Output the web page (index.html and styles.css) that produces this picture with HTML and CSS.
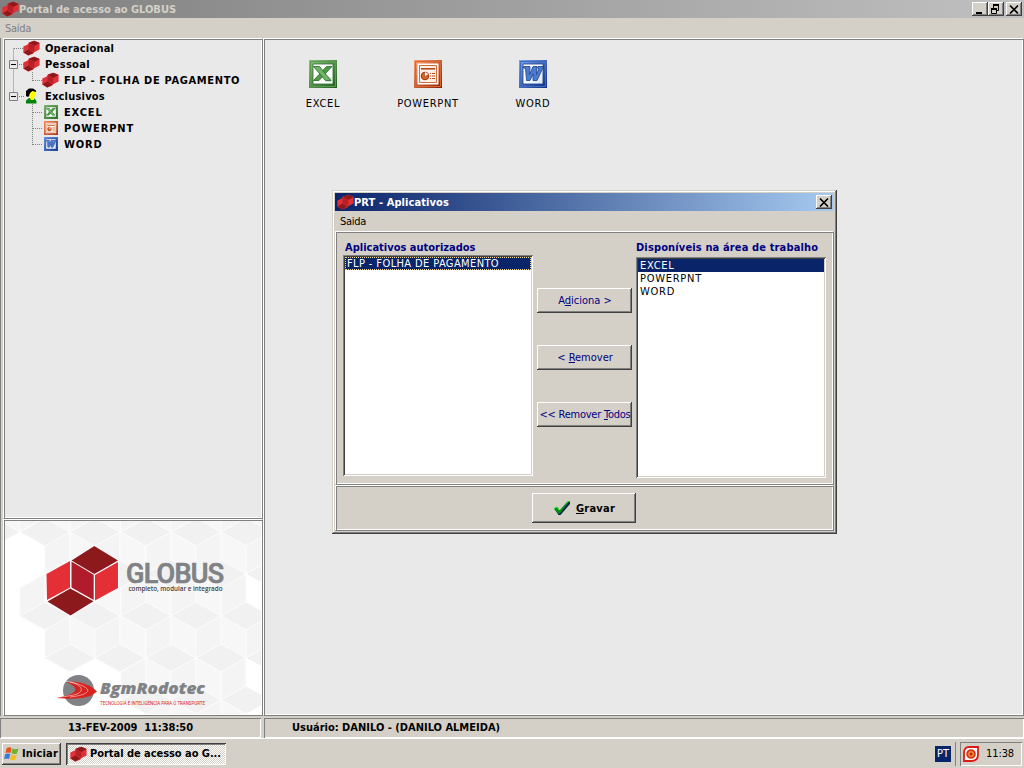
FILE: index.html
```html
<!DOCTYPE html>
<html lang="pt">
<head>
<meta charset="utf-8">
<title>Portal de acesso ao GLOBUS</title>
<link rel="stylesheet" href="styles.css">
</head>
<body>
<svg class="defs" width="0" height="0">
  <defs>
    <symbol id="cubes" viewBox="0 0 16 14">
      <path d="M0.300 5.500 4.500 3.800 5.500 1.800 10.500 0.200 15.600 2V8.500L10.500 11 9.500 12.500 5 14 0.300 11.500Z" fill="#e03038"/>
      <path d="M5.500 2 10.500 0.200 15.600 2.300 10.600 5Z" fill="#8e181c"/>
      <path d="M5.500 2.300 10.600 5V10.800L5 8Z" fill="#b82028"/>
      <path d="M0.600 11 5 8.400 9.700 11.200 5 14Z" fill="#8e181c"/>
    </symbol>
    <linearGradient id="gx" x1="0" y1="0" x2="1" y2="1"><stop offset="0" stop-color="#8cc47c"/><stop offset="1" stop-color="#1c5c1c"/></linearGradient>
    <linearGradient id="gp" x1="0" y1="0" x2="1" y2="1"><stop offset="0" stop-color="#ffa070"/><stop offset="1" stop-color="#8c2000"/></linearGradient>
    <linearGradient id="gw" x1="0" y1="0" x2="1" y2="1"><stop offset="0" stop-color="#7ca4ec"/><stop offset="1" stop-color="#0c2c84"/></linearGradient>
    <linearGradient id="gf" x1="0" y1="0" x2="1" y2="1"><stop offset="0.400" stop-color="#fff"/><stop offset="1" stop-color="#d8e4f4"/></linearGradient>
    <symbol id="excel" viewBox="0 0 28 28">
      <path d="M0 0H28V28H0Z" fill="url(#gx)"/><path d="M1.500 1.500H26.500V26.500H1.500Z" fill="none" stroke="#5c9c50"/>
      <path d="M4 4H24V24H4Z" fill="#fff" stroke="#2c702c" stroke-width=".8"/>
      <path d="M16 17H23V22H16Z" fill="#d4ecd0"/>
      <path d="M17.500 6.500H23L10 20.500H4.500Z" fill="#4c9c48" stroke="#246424" stroke-width=".8"/>
      <path d="M4.500 6.500H10.500L22 20.500H16.500Z" fill="#70b468" stroke="#246424" stroke-width=".8"/>
    </symbol>
    <symbol id="ppt" viewBox="0 0 28 28">
      <path d="M0 0H28V28H0Z" fill="url(#gp)"/><path d="M1.500 1.500H26.500V26.500H1.500Z" fill="none" stroke="#dc6430"/>
      <path d="M3.500 3.500H24.500V24.500H3.500Z" fill="#fff"/>
      <path d="M5.500 5.500H22.500V22.500H5.500Z" fill="#fff0e8" stroke="#d46c38"/>
      <path d="M7 8.800H21" stroke="#b84818" stroke-width="1.600"/>
      <circle cx="11" cy="16" r="3.800" fill="#d46430" stroke="#9c3808"/><path d="M11 16V12L14.500 14Z" fill="#fff"/>
      <path d="M16 13.500H17M18 13.500H21M16 16H17M18 16H21M16 18.500H17M18 18.500H21" stroke="#b84818"/>
    </symbol>
    <symbol id="word" viewBox="0 0 28 28">
      <path d="M0 0H28V28H0Z" fill="url(#gw)"/><path d="M1.500 1.500H26.500V26.500H1.500Z" fill="none" stroke="#3c6cc4"/>
      <path d="M4 4H24V24H4Z" fill="url(#gf)" stroke="#183c8c" stroke-width=".8"/>
      <path d="M4.500 6.500H11V8L10.500 14.500 14 6.500H18L17.500 14.500 20 8.500 18.500 8 19 6.500H24.500L18 20.500H14V14L11 20.500H7.500L6.500 8.500 4.500 8Z" fill="#4c7cd0" stroke="#183c8c" stroke-width=".8"/>
    </symbol>
  </defs>
</svg>

<div class="screen">
  <header class="titlebar titlebar-main">
    <svg class="cube-icon" width="17" height="16"><use href="#cubes"/></svg>
    <h1 class="title">Portal de acesso ao GLOBUS</h1>
    <div class="winbtns">
      <button class="winbtn" aria-label="Minimizar"><svg width="12" height="10"><path d="M2 9H8" stroke="#000" stroke-width="2"/></svg></button>
      <button class="winbtn" aria-label="Restaurar"><svg width="12" height="10"><path d="M3 1H9M1 5H7" stroke="#000" stroke-width="2"/><path d="M3.500 1V4M8.500 1V6.500H7M1.500 4V9.500H6.500V4" fill="none" stroke="#000"/></svg></button>
      <button class="winbtn close" aria-label="Fechar"><svg width="12" height="10"><path d="M2 1.500 10 9.500M10 1.500 2 9.500" stroke="#000" stroke-width="1.700"/></svg></button>
    </div>
  </header>
  <nav class="menu menu-main"><span class="narrow">Saída</span></nav>

  <main class="workspace">
    <div class="sidebar">
      <section class="bevel tree-panel">
        <svg class="tree-lines" width="40" height="110">
          <path d="M8.500 7.500V56M9 7.500H19M14 23.500H19M14 55.500H19M27.500 31V40M28 39.500H38M27.500 63V104M28 71.500H38M28 87.500H38M28 103.500H38" fill="none" stroke="#808080" stroke-dasharray="1 1"/>
          <path d="M4.500 19.500H12.500V27.500H4.500ZM4.500 51.500H12.500V59.500H4.500Z" fill="#e9e9e9" stroke="#808080"/>
          <path d="M6 23.500H11M6 55.500H11" stroke="#000"/>
        </svg>
        <ul class="tree">
          <li><svg width="17" height="16"><use href="#cubes"/></svg><span>Operacional</span></li>
          <li><svg width="17" height="16"><use href="#cubes"/></svg><span class="pessoal">Pessoal</span></li>
          <li class="child"><svg width="17" height="16"><use href="#cubes"/></svg><span>FLP - FOLHA DE PAGAMENTO</span></li>
          <li><svg width="17" height="16" viewBox="0 0 17 16"><path d="M3 15.500V12.500L6 10H11L13.500 13V15.500Z" fill="#008000"/><path d="M5.500 4 8 2H13V7L11 10V12H8L6 9Z" fill="#ffff00"/><path d="M3 8V3L6 0.500H10L13 2.500V4L9.500 3 7 5 6 8 5 9Z" fill="#000"/></svg><span>Exclusivos</span></li>
          <li class="child app-item"><svg width="14" height="14"><use href="#excel"/></svg><span>EXCEL</span></li>
          <li class="child app-item"><svg width="14" height="14"><use href="#ppt"/></svg><span>POWERPNT</span></li>
          <li class="child app-item"><svg width="14" height="14"><use href="#word"/></svg><span>WORD</span></li>
        </ul>
      </section>
      <section class="bevel brand">
        <svg width="256" height="193" viewBox="5 521 256 193">
          <defs>
            <g id="hex" stroke="#fcfcfc" stroke-width="1">
              <path d="M-25.200-14 0-28V0L-25.200 14Z" fill="#f4f4f4"/>
              <path d="M25.200-14 0-28V0L25.200 14Z" fill="#f7f7f7"/>
              <path d="M0 0 25.200 14 0 28-25.200 14Z" fill="#f1f1f1"/>
            </g>
          </defs>
          <path d="M5 521H261V714H5Z" fill="#fff"/>
          <use href="#hex" x="-5" y="518"/><use href="#hex" x="45" y="518"/><use href="#hex" x="95" y="518"/><use href="#hex" x="146" y="518"/><use href="#hex" x="196" y="518"/><use href="#hex" x="246" y="518"/>
          <use href="#hex" x="70" y="560"/><use href="#hex" x="120" y="560"/><use href="#hex" x="171" y="560"/><use href="#hex" x="221" y="560"/><use href="#hex" x="271" y="560"/>
          <use href="#hex" x="45" y="602"/><use href="#hex" x="95" y="602"/><use href="#hex" x="146" y="602"/><use href="#hex" x="196" y="602"/>
          <g stroke="#fcfcfc"><path d="M221 588 246 574V602L221 616Z" fill="#f4f4f4"/><path d="M246 602 271 616 246 630 221 616Z" fill="#f1f1f1"/></g>
          <path d="M246.500 574 261 582V610L246.500 602Z" fill="#fff"/>
          <use href="#hex" x="70" y="644"/><use href="#hex" x="120" y="644"/><use href="#hex" x="171" y="644"/><use href="#hex" x="221" y="644"/><use href="#hex" x="271" y="644"/>
          <use href="#hex" x="146" y="686"/><use href="#hex" x="196" y="686"/><use href="#hex" x="246" y="686"/>
          <path d="M246.500 658 261 666V694L246.500 686Z" fill="#fff"/>
          <use href="#hex" x="171" y="728"/><use href="#hex" x="221" y="728"/>
          <path d="M94.500 545 119 560.500V588L94.500 602 70.500 616 46 601V574L70 560Z" fill="#fff"/>
          <path d="M94.300 546 118 560.500 94.300 574 71.500 560.500Z" fill="#8c191c"/>
          <path d="M71.500 561.500 93.700 574.700V600L71.500 587.500Z" fill="#b01c2b"/>
          <path d="M95 575 118 562V588L95 600.500Z" fill="#e42f37"/>
          <path d="M46.500 574 70 561V587.500L47 600Z" fill="#e42f37"/>
          <path d="M70.300 588.500 93.500 601.300 70.500 615.500 47.500 601.500Z" fill="#8c191c"/>
          <text class="logo-name" x="126" y="582.500" textLength="98" lengthAdjust="spacing">GLOBUS</text>
          <text class="logo-tag" x="128.500" y="590.500" textLength="94" lengthAdjust="spacingAndGlyphs">completo, modular e integrado</text>
          <circle cx="78.500" cy="690.500" r="15.500" fill="#808286"/>
          <path d="M66 682C76 680 90 684 97 691.500 89 699 76 699.500 57 698L68 695C79 692 77 686 66 682Z" fill="#d8231f"/>
          <path d="M64 681C76 682 83 687 81 691 79 695 69 696 60 697M70 682C81 684 88 688 88 691 85 695 78 696 70 697" fill="none" stroke="#fff" stroke-width=".5"/>
          <text class="bgm-name" x="100" y="694" textLength="105" lengthAdjust="spacingAndGlyphs">BgmRodotec</text>
          <text class="bgm-tag" x="100" y="704.500" textLength="105" lengthAdjust="spacingAndGlyphs">TECNOLOGIA E INTELIGÊNCIA PARA O TRANSPORTE</text>
        </svg>
      </section>
    </div>

    <section class="bevel desktop">
      <div class="app"><svg width="28" height="28"><use href="#excel"/></svg><span class="wide">EXCEL</span></div>
      <div class="app"><svg width="28" height="28"><use href="#ppt"/></svg><span class="wide">POWERPNT</span></div>
      <div class="app"><svg width="28" height="28"><use href="#word"/></svg><span class="wide">WORD</span></div>
    </section>
  </main>

  <footer class="status">
    <div class="cell date">13-FEV-2009&nbsp; 11:38:50</div>
    <div class="cell user">Usuário: DANILO - (DANILO ALMEIDA)</div>
  </footer>

  <div class="taskbar">
    <button class="raised start">
      <svg width="16" height="16" viewBox="0 0 16 16"><path d="M2.500 2.500Q5 0.500 7.500 2L6.500 7Q4 5.800 1.500 7Z" fill="#e8501c"/><path d="M8.500 2.500Q11 4 14.500 2.500L13 7.500Q10.500 8.800 7.500 7.300Z" fill="#6cb42c"/><path d="M1.300 8Q4 6.800 6.300 8L5 13Q3 11.800 0 13Z" fill="#3c78d8"/><path d="M7.300 8.500Q10 10 12.800 8.700L11.500 13.500Q9 15 6 13.500Z" fill="#f4bc1c"/></svg>
      <span>Iniciar</span>
    </button>
    <button class="task">
      <svg width="17" height="16"><use href="#cubes"/></svg>
      <span>Portal de acesso ao G...</span>
    </button>
    <span class="lang">PT</span>
    <div class="tray">
      <svg width="16" height="16" viewBox="0 0 16 16"><path d="M6 1H15V9Q15 15 8 15H1V7Q1 1 6 1Z" fill="#fff" stroke="#d81c14" stroke-width="1.800"/><circle cx="8" cy="8" r="3.900" fill="#f08838" stroke="#d83418" stroke-width="1.800"/><circle cx="8" cy="8" r="1.500" fill="#b82c18"/></svg>
      <span>11:38</span>
    </div>
  </div>

  <div class="dialog" role="dialog">
    <div class="titlebar titlebar-dialog">
      <svg class="cube-icon" width="17" height="16"><use href="#cubes"/></svg>
      <h2 class="title">PRT - Aplicativos</h2>
      <div class="winbtns">
        <button class="winbtn" aria-label="Fechar"><svg width="12" height="10"><path d="M2 1.500 10 9.500M10 1.500 2 9.500" stroke="#000" stroke-width="1.700"/></svg></button>
      </div>
    </div>
    <nav class="menu menu-dialog"><span class="narrow">Saida</span></nav>
    <div class="bevel dialog-body">
      <div class="col col-left">
        <h3>Aplicativos autorizados</h3>
        <ul class="list"><li class="selected focus">FLP - FOLHA DE PAGAMENTO</li></ul>
      </div>
      <div class="actions">
        <button class="raised"><span>A<u>d</u>iciona &gt;</span></button>
        <button class="raised"><span>&lt; <u>R</u>emover</span></button>
        <button class="raised all"><span>&lt;&lt; Remover <u>T</u>odos</span></button>
      </div>
      <div class="col col-right">
        <h3>Disponíveis na área de trabalho</h3>
        <ul class="list"><li class="selected">EXCEL</li><li>POWERPNT</li><li>WORD</li></ul>
      </div>
    </div>
    <div class="bevel dialog-foot">
      <button class="raised save">
        <svg width="18" height="16" viewBox="0 0 18 16"><path d="M1.500 9 4.500 8 7 11 14.500 2 17 1.500 17 4 7.500 15 5.500 15Z" fill="#002050"/><path d="M1 8.500 4.500 7 6.500 10.500 14.500 1.500 16.500 1 7 13.500 5 13.500Z" fill="#008c10"/><path d="M1 8.500 4 7 6 10M12 4 16.500 0.800" fill="none" stroke="#20e820"/></svg>
        <span><u>G</u>ravar</span>
      </button>
    </div>
  </div>
</div>
</body>
</html>
```
FILE: styles.css
```css
* { box-sizing: border-box; }
body { margin: 0; font: 11px/13px "DejaVu Sans Condensed", "DejaVu Sans", sans-serif; font-stretch: condensed; color: #000; }
h1, h2, h3, ul { margin: 0; padding: 0; font: inherit; list-style: none; }
button { padding: 0; border: 0; font: inherit; color: inherit; background: #d4d0c8; }
svg { display: block; flex: none; }
u { text-decoration: underline; text-underline-offset: 1px; text-decoration-thickness: 1px; }
span, li, h1, h2, h3 { white-space: nowrap; }
.defs { position: absolute; }
.narrow { letter-spacing: -0.29px; }
.wide { letter-spacing: 0.7px; }

.screen { position: relative; width: 1024px; height: 768px; display: flex; flex-direction: column; background: #d4d0c8; overflow: hidden; }

.titlebar { display: flex; align-items: center; height: 18px; font-weight: bold; }
.titlebar-main { background: linear-gradient(90deg, #808080, #c0c0c0); color: #d4d0c8; padding: 0 2px; letter-spacing: -0.03px; }
.titlebar-dialog { background: linear-gradient(90deg, #0a246a, #a6caf0); color: #fff; padding: 0 2px; letter-spacing: 0.09px; }
.winbtns { display: flex; margin-left: auto; }
.winbtn { width: 16px; height: 14px; padding: 1px 2px; box-shadow: inset -1px -1px #404040, inset 1px 1px #fff, inset -2px -2px #808080; }
.winbtn.close { margin-left: 2px; }

.menu { display: flex; align-items: center; height: 20px; padding-left: 5px; }
.menu-main { color: #808080; }

.bevel { border: 1px solid; border-color: #fff #808080 #808080 #fff; box-shadow: inset 1px 1px #808080, inset -1px -1px #fff; }

.workspace { display: flex; height: 678px; padding-left: 3px; box-shadow: inset 1px 0 #808080; }
.sidebar { display: flex; flex-direction: column; width: 260px; }
.tree-panel { position: relative; height: 481px; background: #e9e9e9; padding: 1px 0 0 19px; }
.tree-lines { position: absolute; left: 1px; top: 2px; }
.tree { position: relative; font-weight: bold; letter-spacing: 0.2px; }
.tree li { display: flex; align-items: center; gap: 5px; height: 16px; }
.tree .pessoal { letter-spacing: 0.34px; }
.tree li.child { padding-left: 19px; letter-spacing: 0.66px; }
.tree li.app-item { padding-left: 21px; gap: 6px; letter-spacing: 0.84px; }
.brand { flex: 1; padding: 1px; }
.logo-name { font: 500 27px Roboto, sans-serif; fill: #808286; stroke: #808286; stroke-width: .7; }
.logo-tag { font: 600 7px "Open Sans", sans-serif; fill: #404040; }
.bgm-name { font: italic 800 15px "Open Sans", sans-serif; fill: #808286; stroke: #808286; stroke-width: .2; }
.bgm-tag { font: 5.8px Roboto, sans-serif; fill: #d8231f; }

.desktop { flex: 1; display: flex; align-items: flex-start; padding: 21px 0 0 6px; background: #e9e9e9; }
.app { display: flex; flex-direction: column; align-items: center; gap: 9px; width: 105px; }
.app .wide { padding-left: 1px; }

.status { display: flex; gap: 3px; height: 22px; padding-top: 2px; font-weight: bold; }
.cell { display: flex; align-items: center; height: 20px; padding-bottom: 2px; box-shadow: inset 1px 1px #808080, inset -1px -1px #fff; }
.date { width: 261px; justify-content: center; letter-spacing: -0.05px; }
.user { flex: 1; padding-left: 28px; }

.taskbar { display: flex; align-items: center; flex: 1; padding: 0 2px; border-top: 1px solid #fff; }
.raised { display: flex; align-items: center; justify-content: center; box-shadow: inset -1px -1px #404040, inset 1px 1px #fff, inset -2px -2px #808080; }
.start { width: 59px; height: 22px; gap: 2px; padding-right: 1px; font-weight: bold; letter-spacing: 0.15px; }
.task { display: flex; align-items: center; gap: 3px; width: 160px; height: 22px; margin-left: 5px; padding-left: 4px; font-weight: bold; letter-spacing: -0.04px; background: repeating-conic-gradient(#fff 0 25%, #d4d0c8 0 50%) 0 0 / 2px 2px; box-shadow: inset 1px 1px #404040, inset -1px -1px #fff, inset 2px 2px #808080; }
.lang { display: flex; align-items: center; justify-content: center; width: 16px; height: 16px; margin-left: auto; background: #0a246a; color: #fff; }
.tray { position: relative; display: flex; align-items: center; gap: 7px; width: 62px; height: 24px; margin-left: 9px; padding-left: 3px; letter-spacing: -0.1px; box-shadow: inset 1px 1px #808080, inset -1px -1px #fff; }
.tray::before { content: ""; position: absolute; left: -5px; top: 0; width: 1px; height: 24px; background: #808080; }

.dialog { position: absolute; left: 332px; top: 190px; width: 505px; height: 344px; padding: 3px; background: #d4d0c8; box-shadow: inset -1px -1px #404040, inset 1px 1px #d4d0c8, inset -2px -2px #808080, inset 2px 2px #fff; }
.menu-dialog { height: 20px; }
.dialog-body { display: flex; height: 254px; padding: 9px 7px 0; }
.col h3 { color: #000080; font-weight: bold; height: 14px; }
.col-left { width: 190px; }
.col-left h3 { padding-left: 2px; }
.col-left .list { letter-spacing: 0.39px; }
.col-right { width: 190px; margin-left: auto; }
.col-right h3 { height: 16px; letter-spacing: 0.14px; }
.col-right .list { letter-spacing: 0.74px; }
.list { width: 190px; height: 221px; padding: 2px; background: #fff; box-shadow: inset 1px 1px #808080, inset -1px -1px #fff, inset 2px 2px #404040, inset -2px -2px #d4d0c8; }
.list li { height: 13px; padding-left: 2px; }
.list .selected { background: #0a246a; color: #fff; }
.list .focus { outline: 1px dotted #f5db95; outline-offset: -1px; }
.actions { display: flex; flex-direction: column; gap: 32px; width: 95px; margin: 47px 0 0 4px; color: #000080; letter-spacing: -0.45px; }
.actions .raised { height: 25px; padding-left: 1px; }
.actions .all { letter-spacing: -0.24px; }
.dialog-foot { display: flex; justify-content: center; align-items: center; height: 46px; padding-right: 1px; }
.save { width: 104px; height: 30px; gap: 5px; font-weight: bold; letter-spacing: 0.22px; }
```
